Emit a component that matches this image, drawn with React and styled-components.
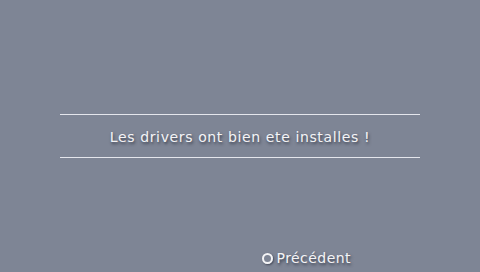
import React from 'react';
import styled, { createGlobalStyle } from 'styled-components';

const GlobalStyle = createGlobalStyle`
  html, body {
    margin: 0;
    padding: 0;
    background: #7e8595;
  }
`;

const Screen = styled.div`
  width: 480px;
  height: 272px;
  background: #7e8595;
  display: flex;
  flex-direction: column;
  font-family: 'DejaVu Sans', 'Roboto', sans-serif;
  color: #f4f4f6;
  overflow: hidden;
`;

const Dialog = styled.div`
  margin: 114px 60px 0;
  border-top: 1px solid #e4e6ec;
  border-bottom: 1px solid #e4e6ec;
  height: 42px;
  display: flex;
  align-items: center;
  justify-content: center;
`;

const Message = styled.p`
  margin: 0;
  padding-top: 1px;
  font-size: 14px;
  letter-spacing: 0.62px;
  text-shadow: 1px 2px 3px rgba(30, 34, 48, 0.7);
`;

const Footer = styled.div`
  margin-top: auto;
  display: flex;
  justify-content: flex-end;
  align-items: center;
  gap: 4px;
  padding: 0 129px 4px 0;
  height: 20px;
`;

const CircleIcon = styled.span`
  width: 7px;
  height: 7px;
  border: 2px solid #f4f4f6;
  border-radius: 50%;
  box-shadow: 1px 1px 2px rgba(30, 34, 48, 0.6);
`;

const Label = styled.span`
  font-size: 14px;
  letter-spacing: 0.45px;
  text-shadow: 1px 2px 3px rgba(30, 34, 48, 0.7);
`;

const App = () => {
  return (
    <>
      <GlobalStyle />
      <Screen>
        <Dialog>
          <Message>Les drivers ont bien ete installes !</Message>
        </Dialog>
        <Footer>
          <CircleIcon />
          <Label>Précédent</Label>
        </Footer>
      </Screen>
    </>
  );
};

export default App;
